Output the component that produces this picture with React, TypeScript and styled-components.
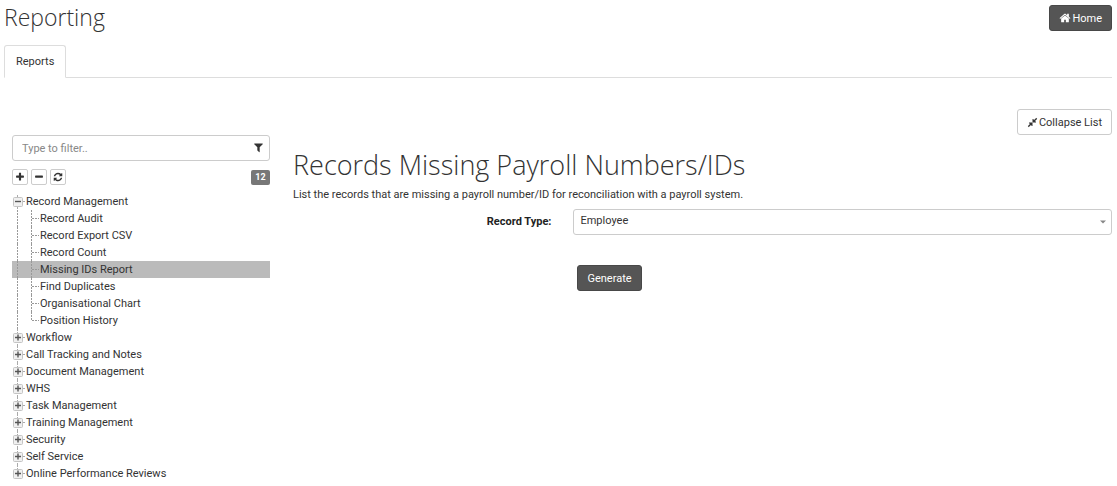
import React, { useState } from "react";
import styled, { createGlobalStyle, css } from "styled-components";

const GlobalStyle = createGlobalStyle`
  *, *::before, *::after { box-sizing: border-box; }
  body {
    margin: 0;
    background: #fff;
    color: #333;
    font-family: Roboto, "Liberation Sans", sans-serif;
    font-size: 11px;
    line-height: 17px;
  }
  button, input, select { font: inherit; color: inherit; }
`;

const Page = styled.div`
  padding: 0 5px 4px 4px;
`;

const Header = styled.header`
  display: flex;
  justify-content: space-between;
  align-items: flex-start;
  height: 45px;
`;

const PageTitle = styled.h1`
  margin: 0;
  font-family: "Open Sans", sans-serif;
  font-size: 23px;
  font-weight: 300;
  line-height: 34px;
`;

const Button = styled.button<{ $dark?: boolean }>`
  display: inline-flex;
  align-items: center;
  gap: 1px;
  height: 26px;
  padding: 0 9px;
  border: 1px solid #ccc;
  border-radius: 3px;
  background: #fff;
  color: #333;
  cursor: pointer;
  ${(p) =>
    p.$dark &&
    css`
      border-color: #484848;
      background: #555;
      color: #fff;
    `}
`;

const HeaderActions = styled.div`
  padding-top: 5px;
`;

const Tabs = styled.nav`
  display: flex;
  height: 33px;
  border-bottom: 1px solid #ddd;
`;

const Tab = styled.a`
  height: 33px;
  padding: 7px 11px;
  border: 1px solid #ddd;
  border-bottom-color: #fff;
  border-radius: 3px 3px 0 0;
  background: #fff;
  color: #333;
  text-decoration: none;
`;

const Toolbar = styled.div`
  display: flex;
  justify-content: flex-end;
  padding-top: 31px;
`;

const Content = styled.div`
  display: grid;
  grid-template-columns: 25% 1fr;
`;

const Sidebar = styled.aside`
  padding: 0 11px 0 8px;
`;

const FilterBox = styled.label`
  display: flex;
  align-items: center;
  height: 26px;
  padding: 0 5px 1px 9px;
  border: 1px solid #ccc;
  border-radius: 3px;
`;

const FilterInput = styled.input`
  flex: 1;
  min-width: 0;
  padding: 1px 0 0;
  border: 0;
  outline: 0;
  background: none;
  &::placeholder { color: #888; opacity: 1; }
`;

const TreeTools = styled.div`
  display: flex;
  align-items: center;
  gap: 3px;
  padding: 8px 0;
`;

const ToolButton = styled.button`
  display: grid;
  place-items: center;
  width: 16px;
  height: 16px;
  padding: 0;
  border: 1px solid #ccc;
  border-radius: 2px;
  background: #fff;
  cursor: pointer;
`;

const Count = styled.span`
  margin-left: auto;
  width: 19px;
  border-radius: 2px;
  background: #777;
  color: #fff;
  font-size: 9px;
  font-weight: 700;
  line-height: 15px;
  text-align: center;
`;

const TreeList = styled.ul`
  margin: 0;
  padding: 0;
  list-style: none;
`;

const TreeRow = styled.div<{ $selected?: boolean }>`
  display: flex;
  height: 17px;
  background: ${(p) => (p.$selected ? "#bbb" : "transparent")};
`;

const TreeLink = styled.a`
  color: #333;
  text-decoration: none;
  white-space: nowrap;
`;

const Toggle = styled.button`
  display: block;
  width: 14px;
  height: 17px;
  padding: 0;
  border: 0;
  background: none;
  cursor: pointer;
`;

const Block = styled.svg`
  display: block;
  flex: none;
`;

const Main = styled.main`
  padding: 13px 0 0 12px;
`;

const ReportTitle = styled.h2`
  margin: 0;
  font-family: "Open Sans", sans-serif;
  font-size: 27px;
  font-weight: 300;
  line-height: 34px;
`;

const Description = styled.p`
  margin: 4px 0 6px;
`;

const FormRow = styled.div`
  display: grid;
  grid-template-columns: 25fr 48fr;
`;

const FieldLabel = styled.label`
  padding: 4px 22px 0 0;
  color: #222;
  font-weight: 700;
  text-align: right;
`;

const SelectBox = styled.div`
  display: flex;
  align-items: center;
  height: 26px;
  border: 1px solid #ccc;
  border-radius: 3px;
`;

const Select = styled.select`
  flex: 1;
  height: 24px;
  margin-right: -16px;
  padding: 0 16px 3px 6px;
  border: 0;
  outline: 0;
  appearance: none;
  background: none;
`;

const Actions = styled.div`
  grid-column: 2;
  padding: 30px 0 0 4px;
`;

const iconPaths = {
  home: "M1472 992v480q0 26-19 45t-45 19h-384v-384h-256v384h-384q-26 0-45-19t-19-45v-480q0-1 .5-3t.5-3l575-474 575 474q1 2 1 6zm223-69l-62 74q-8 9-21 11h-3q-13 0-21-7l-692-577-692 577q-12 8-24 7-13-2-21-11l-62-74q-8-10-7-23.5t11-21.5l719-599q32-26 76-26t76 26l244 204v-195q0-14 9-23t23-9h192q14 0 23 9t9 23v408l219 182q10 8 11 21.5t-7 23.5z",
  filter: "M1595 295q17 41-14 70l-493 493v742q0 42-39 59-13 5-25 5-27 0-45-19l-256-256q-19-19-19-45v-486l-493-493q-31-29-14-70 17-39 59-39h1280q42 0 59 39z",
  refresh: "M1639 1056q0 5-1 7-64 268-268 434.5t-478 166.5q-146 0-282.5-55t-243.5-157l-129 129q-19 19-45 19t-45-19-19-45v-448q0-26 19-45t45-19h448q26 0 45 19t19 45-19 45l-137 137q71 66 161 102t187 36q134 0 250-65t186-179q11-17 53-117 8-23 30-23h192q13 0 22.5 9.5t9.5 22.5zm25-800v448q0 26-19 45t-45 19h-448q-26 0-45-19t-19-45 19-45l138-138q-148-137-349-137-134 0-250 65t-186 179q-11 17-53 117-8 23-30 23h-199q-13 0-22.5-9.5t-9.5-22.5v-7q65-268 270-434.5t480-166.5q146 0 284 55.5t245 156.5l130-129q19-19 45-19t45 19 19 45z",
  compress: "M896 960v448q0 26-19 45t-45 19-45-19l-144-144-332 332q-10 10-23 10t-23-10l-114-114q-10-10-10-23t10-23l332-332-144-144q-19-19-19-45t19-45 45-19h448q26 0 45 19t19 45zm755-672q0 13-10 23l-332 332 144 144q19 19 19 45t-19 45-45 19h-448q-26 0-45-19t-19-45v-448q0-26 19-45t45-19 45 19l144 144 332-332q10-10 23-10t23 10l114 114q10 10 10 23z",
  plus: "M1600 736v192q0 40-28 68t-68 28h-416v416q0 40-28 68t-68 28h-192q-40 0-68-28t-28-68v-416h-416q-40 0-68-28t-28-68v-192q0-40 28-68t68-28h416v-416q0-40 28-68t68-28h192q40 0 68 28t28 68v416h416q40 0 68 28t28 68z",
  minus: "M1600 736v192q0 40-28 68t-68 28h-1216q-40 0-68-28t-28-68v-192q0-40 28-68t68-28h1216q40 0 68 28t28 68z",
};

function Icon({ name, size = 11 }: { name: keyof typeof iconPaths; size?: number }) {
  return (
    <Block width={size} height={size} viewBox="0 0 1792 1792" aria-hidden="true">
      <path fill="currentColor" d={iconPaths[name]} />
    </Block>
  );
}

/* Square expander with the dotted guide running behind it. */
function Expander({ open, first, last }: { open: boolean; first?: boolean; last?: boolean }) {
  return (
    <Block width="14" height="17" aria-hidden="true">
      <path d={`M5.5 ${first ? 2 : 0}V${last ? 8 : 17}M11 8.5H13`} stroke="#aaa" strokeDasharray="2 1" fill="none" />
      <rect x="1.5" y="4.5" width="9" height="9" rx="1" fill="#f0f0f0" stroke="#c4c4c4" />
      <path d={open ? "M3 8.5H9" : "M3 8.5H9M6 5.5V11.5"} stroke="#555" strokeWidth="1.4" />
    </Block>
  );
}

/* Guides in front of a leaf: the root line and the branch line. */
function Branch({ last }: { last: boolean }) {
  return (
    <Block width="28" height="17" aria-hidden="true">
      <path
        d={`M5.5 0V17M19.5 0V${last ? 9 : 17}M20 8.5H27`}
        stroke="#999"
        strokeDasharray="2 1"
        fill="none"
      />
    </Block>
  );
}

const groups: { name: string; items: string[] }[] = [
  {
    name: "Record Management",
    items: [
      "Record Audit",
      "Record Export CSV",
      "Record Count",
      "Missing IDs Report",
      "Find Duplicates",
      "Organisational Chart",
      "Position History",
    ],
  },
  { name: "Workflow", items: [] },
  { name: "Call Tracking and Notes", items: [] },
  { name: "Document Management", items: [] },
  { name: "WHS", items: [] },
  { name: "Task Management", items: [] },
  { name: "Training Management", items: [] },
  { name: "Security", items: [] },
  { name: "Self Service", items: [] },
  { name: "Online Performance Reviews", items: [] },
];

export default function App() {
  const [open, setOpen] = useState(true);
  const [selected, setSelected] = useState("Missing IDs Report");

  return (
    <>
      <GlobalStyle />
      <Page>
        <Header>
          <PageTitle>Reporting</PageTitle>
          <HeaderActions>
            <Button $dark type="button">
              <Icon name="home" size={12} />
              Home
            </Button>
          </HeaderActions>
        </Header>
        <Tabs>
          <Tab href="#reports">Reports</Tab>
        </Tabs>
        <Toolbar>
          <Button type="button">
            <Icon name="compress" />
            Collapse List
          </Button>
        </Toolbar>
        <Content>
          <Sidebar>
            <FilterBox>
              <FilterInput type="text" placeholder="Type to filter.." aria-label="Type to filter" />
              <Icon name="filter" />
            </FilterBox>
            <TreeTools>
              <ToolButton type="button" aria-label="Expand all" onClick={() => setOpen(true)}>
                <Icon name="plus" size={10} />
              </ToolButton>
              <ToolButton type="button" aria-label="Collapse all" onClick={() => setOpen(false)}>
                <Icon name="minus" size={10} />
              </ToolButton>
              <ToolButton type="button" aria-label="Refresh">
                <Icon name="refresh" size={10} />
              </ToolButton>
              <Count>12</Count>
            </TreeTools>
            <TreeList>
              {groups.map((group, i) => {
                const expanded = open && group.items.length > 0;
                return (
                  <li key={group.name}>
                    <TreeRow>
                      <Toggle
                        type="button"
                        aria-label={group.name}
                        aria-expanded={expanded}
                        onClick={() => i === 0 && setOpen(!open)}
                      >
                        <Expander open={expanded} first={i === 0} last={i === groups.length - 1} />
                      </Toggle>
                      <TreeLink href="#group">{group.name}</TreeLink>
                    </TreeRow>
                    {expanded && (
                      <TreeList>
                        {group.items.map((item, j) => (
                          <li key={item}>
                            <TreeRow $selected={item === selected}>
                              <Branch last={j === group.items.length - 1} />
                              <TreeLink href="#report" onClick={() => setSelected(item)}>
                                {item}
                              </TreeLink>
                            </TreeRow>
                          </li>
                        ))}
                      </TreeList>
                    )}
                  </li>
                );
              })}
            </TreeList>
          </Sidebar>
          <Main>
            <ReportTitle>Records Missing Payroll Numbers/IDs</ReportTitle>
            <Description>
              List the records that are missing a payroll number/ID for reconciliation with a payroll system.
            </Description>
            <FormRow>
              <FieldLabel htmlFor="record-type">Record Type:</FieldLabel>
              <SelectBox>
                <Select id="record-type">
                  <option>Employee</option>
                </Select>
                <Block width="11" height="4" viewBox="0 0 11 4" aria-hidden="true">
                  <path d="M0 0.5H6L3 3.5Z" fill="#888" />
                </Block>
              </SelectBox>
              <Actions>
                <Button $dark type="button">
                  Generate
                </Button>
              </Actions>
            </FormRow>
          </Main>
        </Content>
      </Page>
    </>
  );
}
